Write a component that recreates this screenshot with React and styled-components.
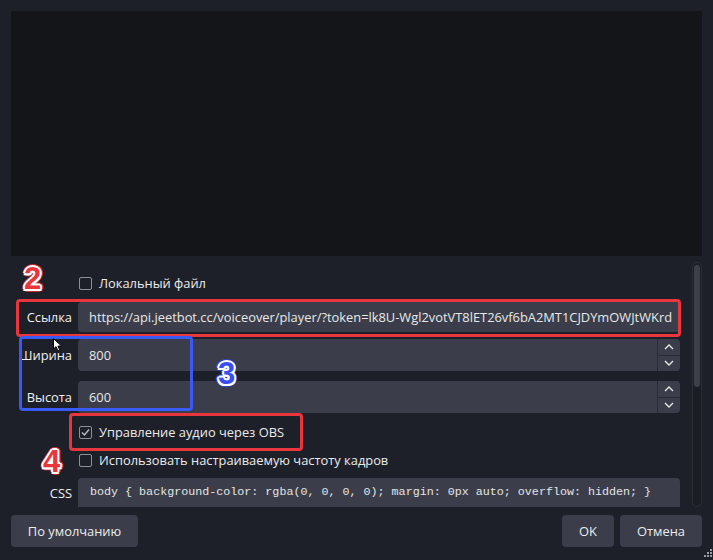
import React from 'react';
import styled, { createGlobalStyle } from 'styled-components';

const GlobalStyle = createGlobalStyle`
    html, body {
        margin: 0;
        padding: 0;
        background: #1e2029;
    }
    * {
        box-sizing: border-box;
    }
`;

const Window = styled.div`
    position: relative;
    width: 713px;
    height: 560px;
    padding: 11px 11px 13px 11px;
    display: flex;
    flex-direction: column;
    background: #1e2029;
    font-family: "Open Sans", "Noto Sans", sans-serif;
    font-size: 12.87px;
    color: #ececec;
    overflow: hidden;
`;

const Preview = styled.div`
    height: 245px;
    background: #141519;
    flex-shrink: 0;
`;

const PropsArea = styled.div`
    display: flex;
    margin-top: 6px;
    height: 245px;
    flex-shrink: 0;
`;

const Form = styled.div`
    flex: 1;
    overflow: hidden;
    padding-top: 11px;
    display: flex;
    flex-direction: column;
`;

const Row = styled.div`
    display: grid;
    grid-template-columns: 61px 1fr;
    column-gap: 6px;
    align-items: center;
    margin-top: ${p => p.$mt || 0}px;
    height: ${p => p.$h}px;
    flex-shrink: 0;
`;

const Label = styled.span`
    text-align: right;
    white-space: nowrap;
    color: #f0f0f0;
    align-self: ${p => (p.$top ? 'start' : 'center')};
    padding-top: ${p => (p.$top ? 6 : 0)}px;
`;

const CheckWrap = styled.label`
    display: flex;
    align-items: center;
    gap: 7px;
    padding-left: 1px;
    color: #ececec;
    white-space: nowrap;
`;

const Box = styled.span`
    width: 13px;
    height: 13px;
    border: 1px solid #8d9099;
    border-radius: 2px;
    display: flex;
    align-items: center;
    justify-content: center;
`;

const Input = styled.div`
    height: 100%;
    background: #3b3e4a;
    border-radius: 4px;
    display: flex;
    align-items: center;
    padding-left: 11px;
    color: #e8e8e8;
    white-space: nowrap;
    overflow: hidden;
`;

const SpinInput = styled(Input)`
    padding-right: 0;
    justify-content: space-between;
`;

const Spin = styled.div`
    width: 23px;
    height: 100%;
    border-left: 1px solid #2a2c34;
    display: flex;
    flex-direction: column;
`;

const SpinBtn = styled.div`
    flex: 1;
    display: flex;
    align-items: center;
    justify-content: center;
    & + & {
        border-top: 1px solid #2a2c34;
    }
`;

const CodeArea = styled.div`
    height: 100%;
    background: #3b3e4a;
    border-radius: 4px 4px 0 0;
    padding: 7px 0 0 12px;
    font-family: "Liberation Mono", "DejaVu Sans Mono", monospace;
    font-size: 11.7px;
    color: #e4e4e4;
    white-space: nowrap;
    overflow: hidden;
`;

const ScrollTrack = styled.div`
    width: 10px;
    margin-left: 12px;
    border: 1px solid #2c2f38;
    border-radius: 5px;
    background: #1b1d24;
    padding: 2px 1px;
`;

const ScrollThumb = styled.div`
    height: 122px;
    border-radius: 3px;
    background: #3d404b;
`;

const Footer = styled.div`
    display: flex;
    gap: 6px;
    margin-top: 8px;
    height: 32px;
`;

const Button = styled.div`
    width: ${p => p.$w}px;
    height: 32px;
    border-radius: 4px;
    background: #3b3e4a;
    color: #ececec;
    display: flex;
    align-items: center;
    justify-content: center;
    margin-left: ${p => (p.$push ? 'auto' : '0')};
`;

const Mark = styled.div`
    position: absolute;
    left: ${p => p.$x}px;
    top: ${p => p.$y}px;
    width: ${p => p.$w}px;
    height: ${p => p.$h}px;
    border: 3px solid ${p => p.$c};
    border-radius: 4px;
    pointer-events: none;
`;

const Digit = styled.span`
    position: absolute;
    left: ${p => p.$x}px;
    top: ${p => p.$y}px;
    font-family: "Liberation Sans", Arial, sans-serif;
    font-weight: 700;
    font-size: 31px;
    line-height: 1;
    color: ${p => p.$c};
    text-shadow:
        2px 0 0 #fff, -2px 0 0 #fff, 0 2px 0 #fff, 0 -2px 0 #fff,
        1.5px 1.5px 0 #fff, -1.5px 1.5px 0 #fff, 1.5px -1.5px 0 #fff, -1.5px -1.5px 0 #fff,
        3px 0 0 ${p => p.$o}, -3px 0 0 ${p => p.$o}, 0 3px 0 ${p => p.$o}, 0 -3px 0 ${p => p.$o},
        2.3px 2.3px 0 ${p => p.$o}, -2.3px 2.3px 0 ${p => p.$o}, 2.3px -2.3px 0 ${p => p.$o}, -2.3px -2.3px 0 ${p => p.$o};
`;

const Overlay = styled.div`
    position: absolute;
    left: ${p => p.$x}px;
    top: ${p => p.$y}px;
    line-height: 0;
    pointer-events: none;
`;

const Chevron = ({ up }) => (
    <svg width="10" height="6" viewBox="0 0 10 6">
        <polyline
            points={up ? '1,5 5,1 9,5' : '1,1 5,5 9,1'}
            fill="none"
            stroke="#e6e6e6"
            strokeWidth="1.4"
        />
    </svg>
);

const Check = ({ checked, children }) => (
    <CheckWrap>
        <Box>
            {checked && (
                <svg width="11" height="11" viewBox="0 0 11 11">
                    <polyline points="2,5.5 4.5,8 9,2.5" fill="none" stroke="#b4b6bc" strokeWidth="1.5" />
                </svg>
            )}
        </Box>
        {children}
    </CheckWrap>
);

const SpinField = ({ value }) => (
    <SpinInput>
        {value}
        <Spin>
            <SpinBtn><Chevron up /></SpinBtn>
            <SpinBtn><Chevron /></SpinBtn>
        </Spin>
    </SpinInput>
);

const App = () => {
    return (
        <>
            <GlobalStyle />
            <Window>
                <Preview />
                <PropsArea>
                    <Form>
                        <Row $h={20}>
                            <span />
                            <Check>Локальный файл</Check>
                        </Row>
                        <Row $mt={9} $h={30}>
                            <Label>Ссылка</Label>
                            <Input>https://api.jeetbot.cc/voiceover/player/?token=lk8U-Wgl2votVT8lET26vf6bA2MT1CJDYmOWJtWKrd</Input>
                        </Row>
                        <Row $mt={7} $h={32}>
                            <Label>Ширина</Label>
                            <SpinField value="800" />
                        </Row>
                        <Row $mt={10} $h={32}>
                            <Label>Высота</Label>
                            <SpinField value="600" />
                        </Row>
                        <Row $mt={9} $h={20}>
                            <span />
                            <Check checked>Управление аудио через OBS</Check>
                        </Row>
                        <Row $mt={8} $h={20}>
                            <span />
                            <Check>Использовать настраиваемую частоту кадров</Check>
                        </Row>
                        <Row $mt={8} $h={40}>
                            <Label $top>CSS</Label>
                            <CodeArea>body {'{'} background-color: rgba(0, 0, 0, 0); margin: 0px auto; overflow: hidden; {'}'}</CodeArea>
                        </Row>
                    </Form>
                    <ScrollTrack>
                        <ScrollThumb />
                    </ScrollTrack>
                </PropsArea>
                <Footer>
                    <Button $w={127}>По умолчанию</Button>
                    <Button $w={52} $push>OK</Button>
                    <Button $w={82}>Отмена</Button>
                </Footer>

                <Mark $x={16} $y={299} $w={665} $h={38} $c="#e8363c" />
                <Mark $x={19} $y={336} $w={174} $h={75} $c="#3a5af5" />
                <Mark $x={69} $y={413} $w={234} $h={38} $c="#e8363c" />

                <Digit $x={24} $y={263} $c="#e8363c" $o="#c9282e">2</Digit>
                <Digit $x={218} $y={358} $c="#3a4ff2" $o="#2f43d8">3</Digit>
                <Digit $x={43} $y={446} $c="#e8363c" $o="#c9282e">4</Digit>

                <Overlay $x={53} $y={338}>
                    <svg width="11" height="14" viewBox="0 0 11 14">
                        <path d="M0.5 0.5 L0.5 11 L3 8.6 L5 13 L6.8 12.2 L4.9 8 L8.5 8 Z" fill="#fff" stroke="#000" strokeWidth="1" />
                    </svg>
                </Overlay>
                <Overlay $x={702} $y={549}>
                    <svg width="11" height="11" viewBox="0 0 11 11">
                        <g fill="#9a9ca4">
                            <rect x="8" y="0" width="2" height="2" />
                            <rect x="5" y="3" width="2" height="2" />
                            <rect x="8" y="3" width="2" height="2" />
                            <rect x="2" y="6" width="2" height="2" />
                            <rect x="5" y="6" width="2" height="2" />
                            <rect x="8" y="6" width="2" height="2" />
                        </g>
                    </svg>
                </Overlay>
            </Window>
        </>
    );
};

export default App;
